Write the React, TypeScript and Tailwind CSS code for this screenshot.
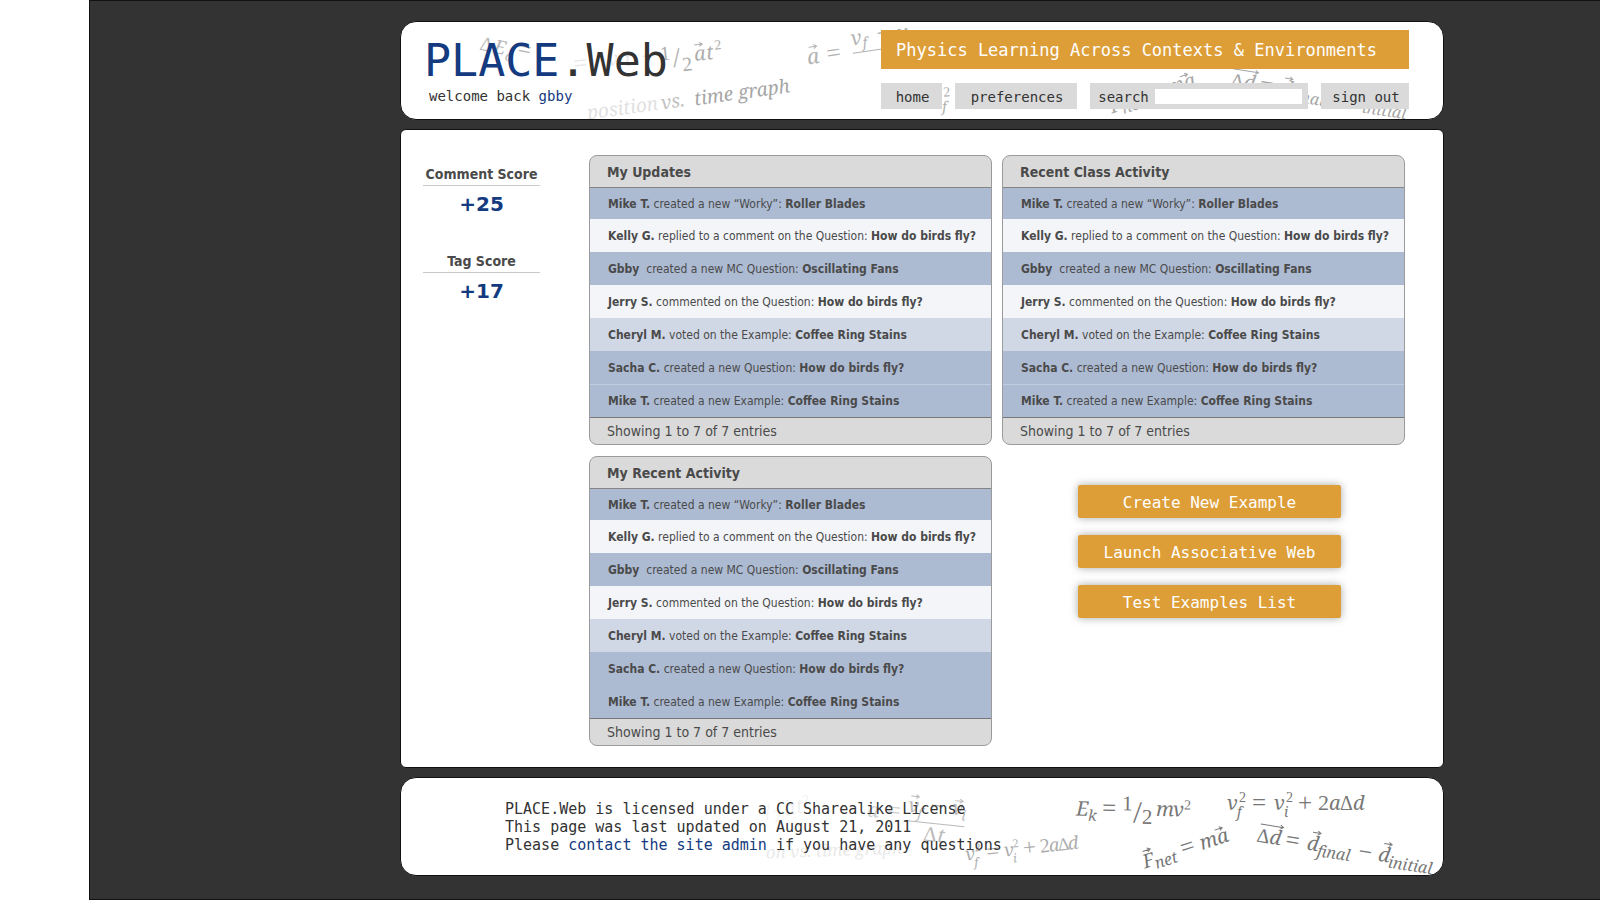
import React from "react";

type Activity = { who: string; action: string; target: string; tone: string };

const BLUE = "bg-[#acbad2]";
const PALE = "bg-[#f3f5f9]";
const MIST = "bg-[#d0d7e5]";

const activities: Activity[] = [
  { who: "Mike T.", action: " created a new “Worky”: ", target: "Roller Blades", tone: BLUE },
  { who: "Kelly G.", action: " replied to a comment on the Question: ", target: "How do birds fly?", tone: PALE },
  { who: "Gbby", action: "\u00a0 created a new MC Question: ", target: "Oscillating Fans", tone: BLUE },
  { who: "Jerry S.", action: " commented on the Question: ", target: "How do birds fly?", tone: PALE },
  { who: "Cheryl M.", action: " voted on the Example: ", target: "Coffee Ring Stains", tone: MIST },
  { who: "Sacha C.", action: " created a new Question: ", target: "How do birds fly?", tone: BLUE },
  { who: "Mike T.", action: " created a new Example: ", target: "Coffee Ring Stains", tone: BLUE },
];

function ActivityPanel({ title, divided = false }: { title: string; divided?: boolean }) {
  return (
    <section className="w-full overflow-hidden rounded-lg border border-[#9b9b9b] bg-[#dadada] text-[#4a4a4a]">
      <h2 className="flex h-8 items-center border-b border-[#858585] px-[17px] text-sm font-bold">{title}</h2>
      <ul className="text-xs">
        {activities.map((a, i) => (
          <li
            key={i}
            className={`flex items-center pl-[18px] ${i === 0 ? "h-[31px]" : "h-[33px]"} ${a.tone} ${
              divided && i === 6 ? "border-t border-[#c3cde0]" : ""
            }`}
          >
            <p className="whitespace-pre">
              <b>{a.who}</b>
              {a.action}
              <b>{a.target}</b>
            </p>
          </li>
        ))}
      </ul>
      <p className="flex h-[27px] items-center border-t border-[#777777] px-[17px] text-sm">Showing 1 to 7 of 7 entries</p>
    </section>
  );
}

function Score({ label, value }: { label: string; value: string }) {
  return (
    <div className="h-[87px] text-center">
      <h2 className="border-b border-[#c9c9c9] pb-px text-sm leading-5 font-bold whitespace-nowrap text-[#4a4a4a]">{label}</h2>
      <p className="pt-1 font-['DejaVu_Sans',sans-serif] text-xl leading-7 font-bold text-[#143a80]">{value}</p>
    </div>
  );
}

type Glyph = [text: string, x: number, y: number, size: number];
type Arrow = [x: number, y: number, width: number];

function Formula({
  x,
  y,
  turn = 0,
  fade = 1,
  glyphs,
  arrows = [],
  bars = [],
}: {
  x: number;
  y: number;
  turn?: number;
  fade?: number;
  glyphs: Glyph[];
  arrows?: Arrow[];
  bars?: Arrow[];
}) {
  return (
    <g transform={`translate(${x} ${y}) rotate(${turn})`} opacity={fade}>
      {glyphs.map(([t, gx, gy, s], i) => (
        <text
          key={i}
          x={gx}
          y={gy}
          fontSize={s}
          className={/^[\d=+−/Δ]/.test(t) ? "font-['Liberation_Serif',serif] not-italic" : ""}
        >
          {t}
        </text>
      ))}
      {arrows.map(([ax, ay, w], i) => (
        <path key={i} d={`M${ax} ${ay}h${w}m-3 -2l3 2l-3 2`} fill="none" stroke="currentColor" />
      ))}
      {bars.map(([bx, by, w], i) => (
        <path key={i} d={`M${bx} ${by}h${w}`} stroke="currentColor" />
      ))}
    </g>
  );
}

const velocity: Glyph[] = [
  ["v", 0, 0, 20],
  ["2", 12, -8, 14],
  ["f", 10, 7, 14],
  ["=", 25, 1, 25],
  ["v", 47, 0, 20],
  ["2", 59, -8, 14],
  ["i", 57, 7, 14],
  ["+", 71, 1, 25],
  ["2", 91, 0, 22],
  ["a", 102, 0, 20],
  ["Δ", 113, 0, 20],
  ["d", 126, 0, 20],
];

const displacement: Glyph[] = [
  ["Δ", 0, 0, 20],
  ["d", 13, 0, 20],
  ["=", 29, 1, 25],
  ["d", 51, 0, 20],
  ["final", 62, 5, 16],
  ["−", 103, 1, 24],
  ["d", 123, 0, 20],
  ["initial", 134, 5, 16],
];

const force: Glyph[] = [
  ["F", 0, 0, 19],
  ["net", 11, 4, 16],
  ["=", 40, 0, 25],
  ["ma", 60, 0, 20],
];

const backdropClass =
  "pointer-events-none absolute inset-y-0 right-0 h-full w-[1041px] font-['Noto_Serif','Liberation_Serif',serif] italic";

function HeaderBackdrop() {
  return (
    <svg viewBox="0 0 1041 96" className={`${backdropClass} text-[#a6a6a6]`} fill="currentColor" aria-hidden="true">
      <Formula x={77} y={27} turn={12} fade={0.8} glyphs={[["Δ", 0, 0, 20], ["E", 14, 0, 19], ["a", 27, 5, 14], ["=", 38, -2, 24]]} />
      <Formula
        x={192}
        y={45}
        turn={-6}
        fade={0.9}
        glyphs={[["1", 67, 0, 20], ["/", 79, 8, 28], ["2", 88, 13, 20], ["a", 101, 4, 20], ["t", 113, 4, 20], ["2", 122, -5, 14]]}
        arrows={[[102, -12, 8]]}
      />
      <Formula x={192} y={45} turn={-6} fade={0.25} glyphs={[["=", -20, 2, 24], ["v", 14, 0, 20], ["i", 24, 5, 14], ["t", 31, 2, 20], ["+", 48, 2, 24]]} />
      <Formula x={186} y={97} turn={-8} fade={0.35} glyphs={[["position", 0, 0, 19]]} />
      <Formula x={260} y={87} turn={-8} fade={0.7} glyphs={[["vs.", 0, 0, 19]]} />
      <Formula x={293} y={83} turn={-8} glyphs={[["time graph", 0, 0, 19]]} />
      <Formula
        x={406}
        y={42}
        turn={-8}
        fade={0.85}
        glyphs={[["a", 0, 0, 21], ["=", 20, 0, 25], ["v", 46, -13, 20], ["f", 57, -9, 14], ["−", 72, -13, 24], ["v", 93, -12, 20], ["i", 104, -9, 14]]}
        arrows={[[3, -17, 8]]}
        bars={[[46, -5, 40]]}
      />
      <Formula x={530} y={83} turn={-4} fade={0.9} glyphs={velocity.slice(0, 3)} />
      <Formula x={710} y={91} turn={-18} glyphs={force} arrows={[[76, -14, 8]]} />
      <Formula x={828} y={64} turn={9} glyphs={displacement} arrows={[[0, -18, 26], [53, -17, 8]]} />
    </svg>
  );
}

function FooterBackdrop() {
  return (
    <svg viewBox="0 0 1041 96" className={`${backdropClass} text-[#777777]`} fill="currentColor" aria-hidden="true">
      <Formula x={364} y={42} turn={-12} fade={0.1} glyphs={[["/", 0, 0, 24], ["2", 8, 4, 18], ["a", 20, 0, 20], ["t", 32, 0, 20], ["2", 40, -8, 13]]} />
      <Formula x={364} y={80} turn={-2} fade={0.16} glyphs={[["on vs. time graph", 0, 0, 17]]} />
      <Formula x={465} y={38} turn={6} fade={0.35} glyphs={[["a", 0, 0, 20], ["=", 19, -1, 25]]} />
      <Formula
        x={465}
        y={38}
        turn={6}
        fade={0.5}
        glyphs={[["v", 40, -9, 20], ["f", 50, -4, 14], ["−", 62, -10, 24], ["v", 84, -11, 20], ["i", 94, -6, 14], ["Δ", 58, 18, 21], ["t", 72, 18, 20]]}
        arrows={[[42, -25, 8], [86, -25, 8]]}
        bars={[[38, 0, 60]]}
      />
      <Formula x={564} y={82} turn={-6} fade={0.6} glyphs={velocity.map(([t, x, y, s]): Glyph => [t, Math.round(x * 0.82), y, s - 2])} />
      <Formula
        x={674}
        y={37}
        turn={1}
        glyphs={[["E", 0, 0, 20], ["k", 12, 5, 15], ["=", 26, 0, 25], ["1", 46, -6, 21], ["/", 57, 6, 31], ["2", 66, 7, 21], ["m", 80, -1, 20], ["v", 97, -1, 20], ["2", 108, -8, 14]]}
      />
      <Formula x={825} y={31} glyphs={velocity} />
      <Formula x={743} y={90} turn={-18} glyphs={force} arrows={[[3, -17, 8], [78, -15, 8]]} />
      <Formula x={854} y={63} turn={9} glyphs={displacement} arrows={[[2, -18, 23], [55, -18, 8], [127, -18, 8]]} />
    </svg>
  );
}

const navItem = "flex h-[26px] items-center justify-center bg-[#dadada] pl-0.5 pt-px text-sm text-[#333333]";
const actions = ["Create New Example", "Launch Associative Web", "Test Examples List"];
const mono = "font-['DejaVu_Sans_Mono',monospace]";

export default function App() {
  return (
    <div className="min-h-screen bg-white pl-[89px]">
      <div className="min-h-screen border-y border-l border-[#111111] bg-[#333333] pt-5 pr-4 pl-[310px] font-['DejaVu_Sans_Condensed','DejaVu_Sans',sans-serif]">
        <div className="flex max-w-[1044px] flex-col gap-[9px]">
          <header className={`relative flex h-[99px] justify-between overflow-hidden rounded-2xl border border-[#111111] bg-white pr-[34px] pl-[23px] ${mono}`}>
            <HeaderBackdrop />
            <div className="relative pt-3">
              <h1 className="text-[45px] leading-[54px] text-[#333333]">
                <span className="text-[#143a80]">PLACE</span>.Web
              </h1>
              <p className="pl-[5px] text-sm leading-4 text-[#333333]">
                welcome back{" "}
                <a href="#profile" className="text-[#143a80]">
                  gbby
                </a>
              </p>
            </div>
            <div className="relative flex w-[528px] flex-col gap-[14px] pt-2">
              <p className="flex h-[39px] items-center bg-[#dd9e37] px-[15px] pt-0.5 text-[17px] whitespace-nowrap text-white">
                Physics Learning Across Contexts &amp; Environments
              </p>
              <nav className="flex justify-between">
                <a href="#home" className={`${navItem} w-[61px]`}>
                  home
                </a>
                <a href="#preferences" className={`${navItem} w-[122px]`}>
                  preferences
                </a>
                <form className={`${navItem} w-[218px] gap-1.5`} onSubmit={(e) => e.preventDefault()}>
                  <label htmlFor="search">search</label>
                  <input id="search" type="search" className="h-[15px] w-[147px] bg-white px-1 text-xs outline-none" />
                </form>
                <a href="#signout" className={`${navItem} w-[88px]`}>
                  sign out
                </a>
              </nav>
            </div>
          </header>

          <main className="flex min-h-[639px] items-start rounded-md border border-[#111111] bg-white pt-[25px] pr-[38px] pb-5 pl-[22px]">
            <aside className="mr-[49px] w-[117px] shrink-0 pt-[9px]">
              <Score label="Comment Score" value="+25" />
              <Score label="Tag Score" value="+17" />
            </aside>
            <div className="grid flex-1 grid-cols-2 gap-x-[10px] gap-y-[11px]">
              <ActivityPanel title="My Updates" divided />
              <ActivityPanel title="Recent Class Activity" divided />
              <ActivityPanel title="My Recent Activity" />
              <div className="flex flex-col items-center gap-[17px] pt-[29px] pl-3">
                {actions.map((label) => (
                  <button
                    key={label}
                    type="button"
                    className={`h-[33px] w-[263px] rounded-xs bg-[#dd9e37] pt-0.5 text-base text-white shadow-[0_0_8px_rgba(0,0,0,0.35)] ${mono}`}
                  >
                    {label}
                  </button>
                ))}
              </div>
            </div>
          </main>

          <footer className={`relative h-[99px] overflow-hidden rounded-2xl border border-[#111111] bg-white pt-[22px] pl-[104px] ${mono}`}>
            <FooterBackdrop />
            <div className="relative text-[15px] leading-[18px] text-[#333333]">
              <p>PLACE.Web is licensed under a CC Sharealike License</p>
              <p>This page was last updated on August 21, 2011</p>
              <p>
                Please{" "}
                <a href="#contact" className="text-[#143a80]">
                  contact the site admin
                </a>{" "}
                if you have any questions
              </p>
            </div>
          </footer>
        </div>
      </div>
    </div>
  );
}
